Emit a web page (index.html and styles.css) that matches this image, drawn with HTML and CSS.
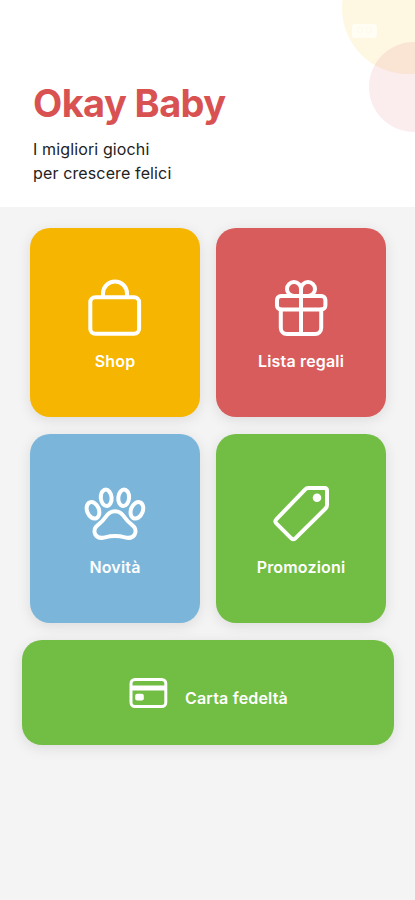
FILE: index.html
```html
<!DOCTYPE html>
<html lang="it">

<head>
    <meta charset="UTF-8">
    <meta name="viewport" content="width=device-width, initial-scale=1.0">
    <title>Okay Baby</title>
    <link rel="stylesheet" href="styles.css">
</head>

<body>
    <header class="header">
        <div class="circle yellow"></div>
        <div class="circle pink"></div>
        <svg class="badge" width="27" height="16" viewBox="0 0 27 16">
            <rect x="1" y="1" width="25" height="14" rx="3" fill="#fffdf4" />
            <g fill="none" stroke="#fefbee" stroke-width="1.5">
                <circle cx="9" cy="7" r="2.5" />
                <circle cx="18" cy="7" r="2.5" />
            </g>
        </svg>
        <h1>Okay Baby</h1>
        <p>I migliori giochi<br>per crescere felici</p>
    </header>

    <main class="menu">
        <div class="grid">
            <a class="tile shop">
                <svg class="icon" viewBox="0 0 64 64">
                    <rect x="7.3" y="21.2" width="48.8" height="36.6" rx="5" />
                    <path d="M20 21V17.5a12 12 0 0 1 24 0V21" />
                </svg>
                <span>Shop</span>
            </a>
            <a class="tile gifts">
                <svg class="icon" viewBox="0 0 64 64">
                    <rect x="8" y="20" width="48.4" height="13.4" rx="4" />
                    <path d="M11.8 33.4V52a6 6 0 0 0 6 6h28.4a6 6 0 0 0 6-6V33.4M32 20v38" />
                    <path d="M32 20h-7a7 7 0 1 1 7-7zM32 20h7a7 7 0 1 0-7-7z" />
                </svg>
                <span>Lista regali</span>
            </a>
            <a class="tile news">
                <svg class="icon" viewBox="0 0 64 64">
                    <ellipse cx="10" cy="28.3" rx="5.9" ry="8.6" transform="rotate(-22 10 28.3)" />
                    <ellipse cx="23.2" cy="15.8" rx="5.4" ry="8.2" transform="rotate(-6 23.2 15.8)" />
                    <ellipse cx="40.7" cy="15.8" rx="5.4" ry="8.2" transform="rotate(6 40.7 15.8)" />
                    <ellipse cx="53.9" cy="28.3" rx="5.9" ry="8.6" transform="rotate(22 53.9 28.3)" />
                    <path d="M32 29.2C27 29.2 24.5 32 22.2 35.5C20.2 38.6 18 40.5 15.3 42.6C11.8 45.2 10.4 49 12.3 52.5C14.3 56 18 56.4 22 55.4C29 53.6 35 53.6 42 55.4C46 56.4 49.7 56 51.7 52.5C53.6 49 52.2 45.2 48.7 42.6C46 40.5 43.8 38.6 41.8 35.5C39.5 32 37 29.2 32 29.2Z" />
                </svg>
                <span>Novità</span>
            </a>
            <a class="tile promo">
                <svg class="icon" viewBox="0 0 64 64">
                    <path d="M39 6H55.5Q58 6 58 8.5V23Q58 25 56.5 26.5L26.3 56.3Q24.3 58.2 22.3 56.3L7.3 41.3Q5.3 39.3 7.3 37.3L36.5 7.2Q37.6 6 39 6Z" />
                    <circle class="solid" cx="48" cy="15.7" r="4.3" />
                </svg>
                <span>Promozioni</span>
            </a>
        </div>

        <a class="card">
            <svg class="card-icon" viewBox="0 0 40 32">
                <rect x="3" y="2.5" width="34.8" height="27" rx="4" />
                <path class="solid" d="M3 8.5h35v5H3z" />
                <rect class="solid" x="7.2" y="16.8" width="8.6" height="6.6" rx="2" />
            </svg>
            <span>Carta fedeltà</span>
        </a>
    </main>
</body>

</html>
```
FILE: styles.css
```css
* {
    box-sizing: border-box;
}

body {
    margin: 0;
    min-height: 900px;
    background: #f4f4f4;
    font-family: Inter, "Liberation Sans", sans-serif;
}

.header {
    position: relative;
    height: 207px;
    padding: 79px 33px 0;
    overflow: hidden;
    background: white;
}

.header h1 {
    margin: 0;
    font-size: 38px;
    line-height: 48px;
    font-weight: 700;
    letter-spacing: -0.6px;
    color: #d95252;
}

.header p {
    margin: 10px 0 0;
    font-size: 16px;
    line-height: 24px;
    letter-spacing: 0.13px;
    color: #222;
}

.circle {
    position: absolute;
    border-radius: 50%;
}

.yellow {
    top: -58px;
    left: 342px;
    width: 132px;
    height: 132px;
    background: rgba(245, 200, 50, 0.14);
}

.pink {
    top: 42px;
    left: 369px;
    width: 90px;
    height: 90px;
    background: rgba(217, 72, 92, 0.1);
}

.badge {
    position: absolute;
    top: 23px;
    left: 351px;
}

.menu {
    padding: 21px 21px 0 22px;
}

.grid {
    display: grid;
    grid-template-columns: 170px 170px;
    grid-auto-rows: 189px;
    gap: 17px 16px;
    padding-left: 8px;
}

.tile,
.card {
    display: flex;
    align-items: center;
    border-radius: 20px;
    box-shadow: 0 3px 14px rgba(0, 0, 0, 0.1);
    color: white;
    font-size: 16px;
    font-weight: 600;
    line-height: 20px;
    letter-spacing: 0.18px;
}

.tile {
    flex-direction: column;
    padding-top: 48px;
}

.tile span {
    margin-top: 11px;
}

.shop {
    background: #f6b500;
}

.gifts {
    background: #d95c5c;
}

.news {
    background: #7bb6da;
}

.promo,
.card {
    background: #72bd43;
}

.icon,
.card-icon {
    fill: none;
    stroke: white;
    stroke-width: 4;
    stroke-linecap: round;
    stroke-linejoin: round;
}

.icon {
    width: 64px;
    height: 64px;
}

.card-icon {
    width: 40px;
    height: 32px;
    margin-right: 17px;
    stroke-width: 3;
}

.icon .solid,
.card-icon .solid {
    fill: white;
    stroke: none;
}

.card {
    width: 372px;
    height: 105px;
    margin-top: 17px;
    padding-left: 106px;
}

.card span {
    padding-top: 11px;
}
```
